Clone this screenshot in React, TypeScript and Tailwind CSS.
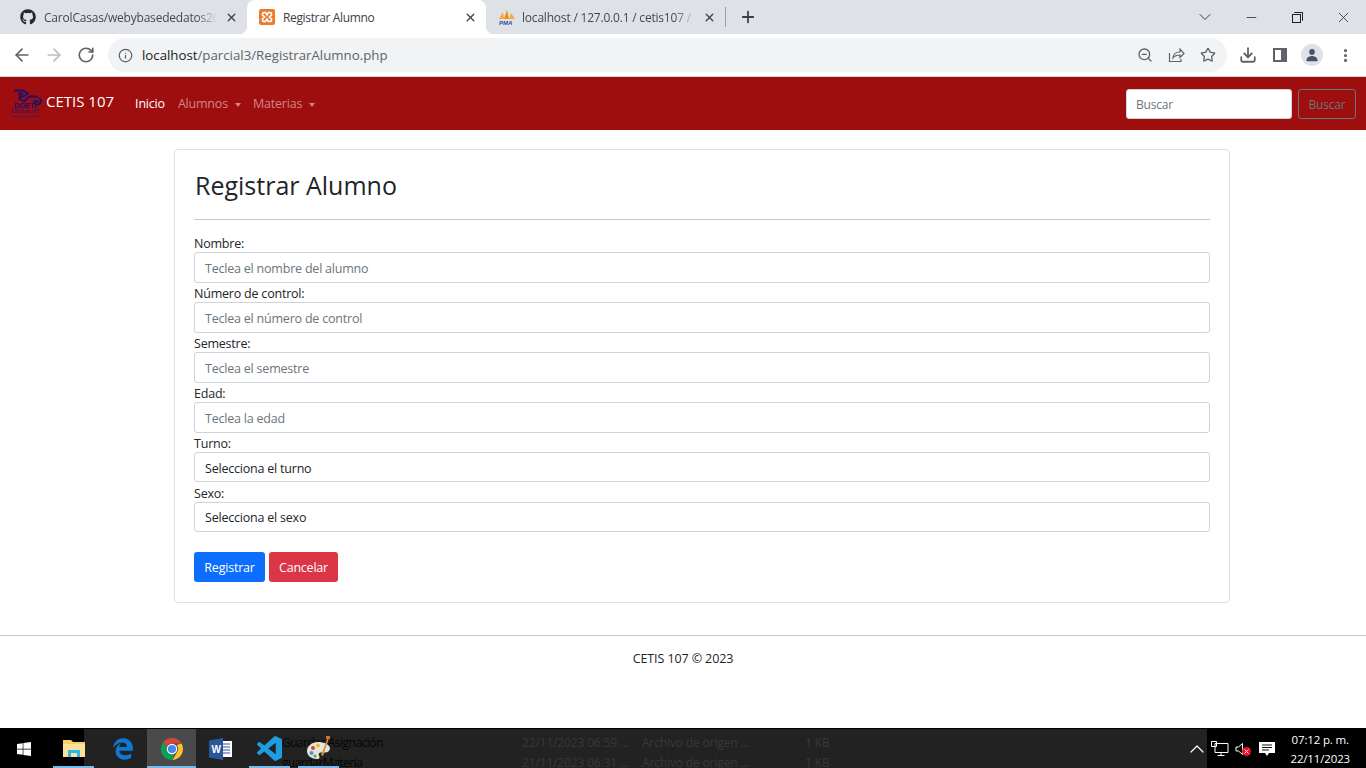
import {
  ArrowLeft,
  ArrowRight,
  ChevronDown,
  ChevronUp,
  Download,
  Info,
  Minus,
  MoreVertical,
  Plus,
  RotateCw,
  Star,
  X,
  ZoomOut,
} from "lucide-react";
import { FaEdgeLegacy, FaGithub, FaWindows } from "react-icons/fa";
import { IoPerson } from "react-icons/io5";

const fields = [
  { label: "Nombre:", placeholder: "Teclea el nombre del alumno" },
  { label: "Número de control:", placeholder: "Teclea el número de control" },
  { label: "Semestre:", placeholder: "Teclea el semestre" },
  { label: "Edad:", placeholder: "Teclea la edad" },
];

function XamppIcon() {
  return (
    <svg width="16" height="16" viewBox="0 0 16 16">
      <rect width="16" height="16" rx="2" fill="#ee7a2b" />
      <path
        d="M5 3.5h1.5L8 6l1.5-2.5H11a1.5 1.5 0 0 1 1.5 1.5v1.2L10.5 8l2 1.8V11a1.5 1.5 0 0 1-1.5 1.5H9.5L8 10l-1.5 2.5H5A1.5 1.5 0 0 1 3.500 11V9.8l2-1.8-2-1.8V5A1.5 1.5 0 0 1 5 3.5z"
        fill="none"
        stroke="#fff"
        strokeWidth="1.6"
      />
    </svg>
  );
}

function PmaIcon() {
  return (
    <svg width="18" height="16" viewBox="0 0 18 16">
      <path d="M1 10 5 3l1 7z" fill="#f6a935" />
      <path d="M6 10 9 1l2 9z" fill="#f08a1d" />
      <path d="M11 10l2-6 4 6z" fill="#f6a935" />
      <text x="1" y="15.5" fontSize="6" fontStyle="italic" fontWeight="700" fill="#2d4f9e" fontFamily="Liberation Sans, sans-serif">
        PMA
      </text>
    </svg>
  );
}

function SchoolLogo() {
  return (
    <svg width="32" height="30" viewBox="0 0 32 30" className="-mt-0.5 shrink-0">
      <g fill="none" stroke="#17136f" strokeWidth="1.8">
        <path d="M2 2.500h9l5 3-5 3H7" />
        <path d="M6 5.500h4l-3 5 5 3 5-5h9" />
        <path d="M27 10a3.500 3.500 0 1 1-5 3.500h5" />
      </g>
      <text x="2" y="19.5" fontSize="7.5" fontWeight="700" fill="#17136f" fontFamily="Liberation Sans, sans-serif">
        DGETI
      </text>
      <text x="-1" y="25" fontSize="5.2" fontWeight="700" fill="#2a1a6e" fontFamily="Liberation Serif, serif">
        CETis no.107
      </text>
      <path d="M2 28.500h26" stroke="#3a1560" strokeWidth="1" strokeDasharray="3 1" />
    </svg>
  );
}

function ExplorerIcon() {
  return (
    <svg width="22" height="20" viewBox="0 0 22 20">
      <path d="M0 1h8l2 2h12v15H0z" fill="#f4d06f" />
      <path d="M0 5h22v13H0z" fill="#fbe29a" />
      <path d="M5 11h12v7h-3v-4H8v4H5z" fill="#29b6e8" />
    </svg>
  );
}

function ChromeIcon() {
  return (
    <svg width="24" height="24" viewBox="0 0 48 48">
      <path d="M24 2a22 22 0 0 1 19.05 11H24a11 11 0 0 0-10.4 7.4L7.2 9.5A22 22 0 0 1 24 2z" fill="#db4437" />
      <path d="M43.05 13A22 22 0 0 1 25 46l9.5-16.5A11 11 0 0 0 33 16z" fill="#fbc02d" />
      <path d="M25 46A22 22 0 0 1 7.2 9.5l9.5 16.6A11 11 0 0 0 29 33z" fill="#0f9d58" />
      <circle cx="24" cy="24" r="10.5" fill="#fff" />
      <circle cx="24" cy="24" r="8.2" fill="#4a86e8" />
    </svg>
  );
}

function WordIcon() {
  return (
    <svg width="24" height="22" viewBox="0 0 24 22">
      <rect x="10" y="3" width="13" height="16" fill="#fff" />
      <path d="M13 6h8M13 9h8M13 12h8M13 15h8" stroke="#2b579a" strokeWidth="1.2" />
      <path d="M0 2.5 14 0v22L0 19.5z" fill="#2b579a" />
      <text x="2.5" y="15" fontSize="10" fontWeight="700" fill="#fff" fontFamily="Liberation Sans, sans-serif">
        W
      </text>
    </svg>
  );
}

function VsCodeIcon() {
  return (
    <svg width="25" height="25" viewBox="0 0 24 24">
      <path
        fill="#1e9de0"
        d="M23.15 2.587L18.21.21a1.494 1.494 0 0 0-1.705.29l-9.46 8.63-4.12-3.128a.999.999 0 0 0-1.276.057L.327 7.261A1 1 0 0 0 .326 8.74L3.899 12 .326 15.26a1 1 0 0 0 .001 1.479L1.65 17.94a.999.999 0 0 0 1.276.057l4.12-3.128 9.46 8.63a1.492 1.492 0 0 0 1.704.29l4.942-2.377A1.5 1.5 0 0 0 24 20.06V3.939a1.5 1.5 0 0 0-.85-1.352zm-5.146 14.861L10.826 12l7.178-5.448v10.896z"
      />
    </svg>
  );
}

function PaintIcon() {
  return (
    <svg width="26" height="26" viewBox="0 0 26 26">
      <path d="M12 6C6 6 1 10 1 15s5 8 10 8c3 0 3-2 2-3.500s0-3 2-3h4c3 0 5-2 5-4 0-4-6-6.500-12-6.500z" fill="#e9e4d8" />
      <circle cx="7" cy="12" r="2" fill="#d9452f" />
      <circle cx="12" cy="9.500" r="2" fill="#f2b632" />
      <circle cx="5.500" cy="17" r="2" fill="#3a9bdc" />
      <circle cx="9" cy="20" r="1.600" fill="#4caf50" />
      <path d="M22 1 15 19l2 1 6-18z" fill="#c99a3f" />
      <path d="M20 0h4v3h-4z" fill="#e06a2c" />
    </svg>
  );
}

function ShareIcon() {
  return (
    <svg width="17" height="16" viewBox="0 0 17 16" fill="none" stroke="currentColor" strokeWidth="1.2">
      <path d="M1.500 6v8.500h11.500V12" />
      <path d="M5 11c.3-3.500 3-6 7-6V2l4 4.500-4 4V8c-3 0-5.500 1-7 3z" />
    </svg>
  );
}

function Tab({
  icon,
  title,
  active,
  fade,
}: {
  icon: React.ReactNode;
  title: string;
  active?: boolean;
  fade?: boolean;
}) {
  return (
    <div className={`relative flex h-[34px] w-[239px] items-center rounded-t-lg pl-3 pr-[9px] ${active ? "bg-white text-[#3c4043]" : "text-[#45494d]"}`}>
      {active && (
        <>
          <span className="absolute -left-2 bottom-0 size-2 bg-[radial-gradient(circle_at_0_0,transparent_8px,#fff_8.5px)]" />
          <span className="absolute -right-2 bottom-0 size-2 bg-[radial-gradient(circle_at_100%_0,transparent_8px,#fff_8.5px)]" />
        </>
      )}
      <span className="flex w-6 shrink-0 items-center">{icon}</span>
      <span className={`min-w-0 flex-1 whitespace-nowrap pt-px text-[12px] tracking-[-0.2px] ${active ? "tracking-[-0.35px]" : ""} ${fade ? "[mask-image:linear-gradient(to_right,#000_88%,transparent)]" : ""}`}>
        {title}
      </span>
      <X size={13} strokeWidth={2.5} className="ml-2 shrink-0 text-[#44474b]" />
    </div>
  );
}

function TrayBarItem({ children, open, hover }: { children: React.ReactNode; open?: boolean; hover?: boolean }) {
  return (
    <div className={`relative flex h-full w-[49px] items-center justify-center ${hover ? "bg-[#4a4a4a]" : ""}`}>
      {children}
      {open && <span className={`absolute bottom-0 h-0.5 bg-[#76b9ed] ${hover ? "inset-x-0" : "inset-x-1"}`} />}
    </div>
  );
}

export default function App() {
  return (
    <div className="flex h-screen flex-col overflow-hidden bg-white font-['Open_Sans',sans-serif] text-[#212529]">
      {/* barra de pestanas */}
      <div className="flex h-[34px] shrink-0 items-center bg-[#dee1e6]">
        <div className="flex pl-2">
          <Tab icon={<FaGithub size={16} className="text-[#24292f]" />} title="CarolCasas/webybasededatos20" fade />
          <Tab icon={<XamppIcon />} title="Registrar Alumno" active />
          <Tab icon={<PmaIcon />} title="localhost / 127.0.0.1 / cetis107 /" fade />
        </div>
        <span className="h-5 w-px bg-[#9aa0a6]" />
        <Plus size={18} strokeWidth={2.4} className="ml-[13px] text-[#3c4043]" />
        <div className="ml-auto flex items-center text-[#202124]">
          <span className="flex w-[46px] justify-center"><ChevronDown size={20} strokeWidth={1} /></span>
          <span className="flex w-[46px] justify-center"><Minus size={15} strokeWidth={1.2} /></span>
          <span className="relative flex w-[46px] justify-center pr-0.5">
            <span className="mt-0.5 size-[9px] border border-[#202124]" />
            <span className="absolute left-[20px] top-0 h-[9px] w-[9px] rounded-[1px] border-r border-t border-[#202124]" />
          </span>
          <span className="flex w-[46px] justify-center"><X size={17} strokeWidth={1.1} /></span>
        </div>
      </div>

      {/* barra de direcciones */}
      <div className="flex h-[43px] shrink-0 items-center border-b border-[#d0d2d5] bg-white pl-3 pr-3 text-[#5f6368]">
        <ArrowLeft size={20} strokeWidth={2} />
        <ArrowRight size={20} strokeWidth={2} className="ml-3 text-[#b9bcc0]" />
        <RotateCw size={18} strokeWidth={2.2} className="ml-[13px]" />
        <div className="ml-[13px] flex h-[34px] flex-1 items-center rounded-full bg-[#f1f3f4] pl-[10px] pr-[10px]">
          <Info size={15} strokeWidth={2} />
          <span className="ml-[9px] pt-0.5 text-[13.25px]">
            <span className="text-[#202124]">localhost</span>/parcial3/RegistrarAlumno.php
          </span>
          <div className="ml-auto flex items-center gap-[15px] pr-px">
            <ZoomOut size={16} />
            <ShareIcon />
            <Star size={16} strokeWidth={2} />
          </div>
        </div>
        <Download size={18} strokeWidth={2.4} className="ml-[12px]" />
        <span className="ml-[16px] flex h-[14px] w-[14px] justify-end border-2 border-[#5f6368]">
          <span className="h-full w-1 bg-[#5f6368]" />
        </span>
        <span className="ml-[14px] flex size-[22px] items-center justify-center rounded-full bg-[#dee1e6] text-[#44546a]">
          <IoPerson size={14} />
        </span>
        <MoreVertical size={17} strokeWidth={2.5} className="ml-[14px]" />
      </div>

      {/* menu del sitio */}
      <nav className="flex h-[53px] shrink-0 items-center bg-[#9e0e0e] pl-3 pr-2.5 text-[12.5px] tracking-[-0.2px]">
        <SchoolLogo />
        <a className="ml-0.5 -mt-1 text-[15px] tracking-normal text-white">CETIS 107</a>
        <a className="ml-[21px] pt-0.5 text-white">Inicio</a>
        <a className="ml-[13px] flex items-center pt-0.5 text-[#cf8686]">
          Alumnos
          <span className="ml-[7px] border-x-[3.5px] border-t-[4px] border-x-transparent border-t-[#cf8686]" />
        </a>
        <a className="ml-3 flex items-center pt-0.5 text-[#cf8686]">
          Materias
          <span className="ml-[7px] border-x-[3.5px] border-t-[4px] border-x-transparent border-t-[#cf8686]" />
        </a>
        <div className="ml-auto flex items-center gap-1.5">
          <div className="flex h-[30px] w-[166px] items-center rounded-[3px] border border-[#ced4da] bg-white pl-[9px] pr-2.5 pt-0.5 text-[12px] text-[#6c757d]">Buscar</div>
          <button className="h-[30px] w-[58px] rounded-[3px] border border-[#6c757d] pt-0.5 text-[12px] text-[#6c757d]">Buscar</button>
        </div>
      </nav>

      {/* formulario */}
      <main className="relative flex-1 overflow-hidden">
        <div className="ml-[174px] mr-[136px] mt-[19px] h-[454px] rounded-[4px] border border-[#dfdfdf] px-[19px] pt-5">
          <h2 className="h-[49px] pl-px text-[25px] font-medium leading-[30px] text-[#212529]">Registrar Alumno</h2>
          <hr className="border-[#c8c8c8]" />
          <div className="mt-[13px] text-[12.5px] tracking-[-0.21px]">
            {fields.map((f) => (
              <div key={f.label}>
                <div className="h-[19px] leading-[21px]">{f.label}</div>
                <div className="flex h-[31px] items-center rounded-[3px] border border-[#ced4da] px-2.5 pt-1 text-[#6c757d]">{f.placeholder}</div>
              </div>
            ))}
            <div className="h-[19px] leading-[21px]">Turno:</div>
            <div className="flex h-[30px] items-center rounded-[3px] border border-[#ced4da] px-2.5 pt-1">Selecciona el turno</div>
            <div className="h-[20px] leading-[23px]">Sexo:</div>
            <div className="flex h-[30px] items-center rounded-[3px] border border-[#ced4da] px-2.5 pt-0.5">Selecciona el sexo</div>
            <div className="mt-5 flex gap-1">
              <button className="h-[30px] w-[71px] rounded-[3px] bg-[#0d6efd] pt-0.5 text-white">Registrar</button>
              <button className="h-[30px] w-[69px] rounded-[3px] bg-[#dc3545] pt-0.5 text-white">Cancelar</button>
            </div>
          </div>
        </div>
        <footer className="mt-8 border-t border-[#c8c8c8] pt-[13px] text-center text-[12.5px] leading-[20px] tracking-[-0.1px]">CETIS 107 © 2023</footer>
      </main>

      {/* barra de tareas */}
      <div className="relative flex h-10 shrink-0 items-stretch border-t border-black bg-[linear-gradient(to_right,#000_84px,#222_84px,#222_1207px,#000_1207px)] text-white">
        <div className="absolute inset-0 overflow-hidden text-[12px] tracking-[-0.15px]">
          <div className="absolute left-[282px] top-[5px] tracking-[-0.5px] text-[#050505]">Guardar Asignación</div>
          <div className="absolute left-[282px] top-[25px] tracking-[-0.5px] text-[#050505]">guardarMateria</div>
          <div className="absolute left-[522px] top-[5px] text-[#383838]">22/11/2023 06:59 ...</div>
          <div className="absolute left-[522px] top-[25px] text-[#383838]">21/11/2023 06:31 ...</div>
          <div className="absolute left-[642px] top-[5px] text-[#383838]">Archivo de origen ...</div>
          <div className="absolute left-[642px] top-[25px] text-[#383838]">Archivo de origen ...</div>
          <div className="absolute left-[805px] top-[5px] text-[#383838]">1 KB</div>
          <div className="absolute left-[805px] top-[25px] text-[#383838]">1 KB</div>
        </div>
        <div className="relative flex w-[49px] items-center justify-center pr-0.5">
          <FaWindows size={16} />
        </div>
        <div className="relative flex items-stretch">
          <TrayBarItem open><ExplorerIcon /></TrayBarItem>
          <TrayBarItem><FaEdgeLegacy size={22} className="text-[#0f78d4]" /></TrayBarItem>
          <TrayBarItem open hover><ChromeIcon /></TrayBarItem>
          <TrayBarItem><WordIcon /></TrayBarItem>
          <TrayBarItem open><VsCodeIcon /></TrayBarItem>
          <TrayBarItem open><PaintIcon /></TrayBarItem>
        </div>
        <div className="relative ml-auto flex items-center pr-4">
          <ChevronUp size={24} strokeWidth={1.2} />
          <svg width="20" height="16" viewBox="0 0 20 16" className="ml-px" fill="none" stroke="#fff" strokeWidth="1">
            <path d="M5 2.500h13v9H5zM1.500.500h5v5h-5zM11 11.500v3M7.500 14.500h7" />
          </svg>
          <span className="relative ml-[5px] flex w-[18px]">
            <svg width="12" height="14" viewBox="0 0 12 14" fill="none" stroke="#fff" strokeWidth="1">
              <path d="M1 5h2.500L7.500 1.500v11L3.500 9H1z" />
            </svg>
            <span className="absolute left-[7px] top-[5px] flex size-[9px] items-center justify-center rounded-full bg-[#e81123]">
              <X size={7} strokeWidth={3} />
            </span>
          </span>
          <svg width="16" height="16" viewBox="0 0 16 16" className="ml-[6px]" fill="#fff">
            <path d="M0 1h16v11H10l-2 3-2-3H0z" />
            <path d="M3 4h10M3 6.500h10M3 9h7" stroke="#111" strokeWidth="1" />
          </svg>
          <div className="ml-[15px] text-center text-[11.5px] leading-[19px] tracking-[-0.15px]">
            <div>07:12 p. m.</div>
            <div>22/11/2023</div>
          </div>
        </div>
      </div>
    </div>
  );
}
